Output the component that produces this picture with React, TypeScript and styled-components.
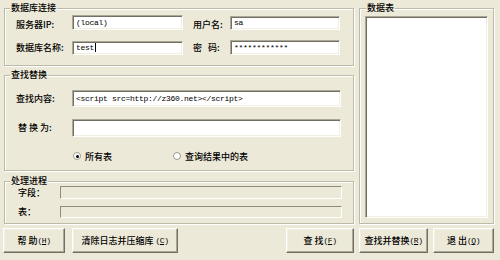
import React from "react";
import styled, { createGlobalStyle } from "styled-components";

const Global = createGlobalStyle`
  html, body { margin: 0; padding: 0; background: #ECE9D8; }
  body { width: 500px; height: 260px; overflow: hidden; }
`;

const cjk = `"Noto Sans CJK SC", "Noto Sans", sans-serif`;

const Window = styled.div`
  width: 500px;
  height: 260px;
  box-sizing: border-box;
  padding: 8px 6px 0 4px;
  background: #ECE9D8;
  font-family: ${cjk};
  font-size: 9px;
  font-weight: 500;
  color: #000;
  display: flex;
  flex-direction: column;
`;

const Main = styled.div`
  display: grid;
  grid-template-columns: 350px 135px;
  column-gap: 5px;
  height: 216px;
`;

const LeftCol = styled.div`
  display: flex;
  flex-direction: column;
`;

const Group = styled.div<{ $h: number; $mt?: number }>`
  position: relative;
  box-sizing: border-box;
  height: ${(p) => p.$h}px;
  margin-top: ${(p) => p.$mt ?? 0}px;
  border: 1px solid #BDBAA9;
  box-shadow: inset 1px 1px 0 #fff, 1px 1px 0 #fff;
`;

const Title = styled.span<{ $left?: number }>`
  position: absolute;
  top: -7px;
  left: ${(p) => p.$left ?? 5}px;
  padding: 0 1px;
  line-height: 12px;
  background: #ECE9D8;
  font-size: 9px;
  color: #000;
  white-space: nowrap;
`;

const ConnGrid = styled.div`
  display: grid;
  grid-template-columns: 56px 111px 47px 110px;
  grid-template-rows: 15px 15px;
  row-gap: 10px;
  padding: 6px 0 0 11px;
  align-items: center;
`;

const Label = styled.span<{ $pl?: number; $dy?: number }>`
  padding-left: ${(p) => p.$pl ?? 0}px;
  position: relative;
  top: ${(p) => p.$dy ?? 0}px;
  white-space: nowrap;
  line-height: 12px;
`;

const TextBox = styled.div<{ $h: number }>`
  box-sizing: border-box;
  height: ${(p) => p.$h}px;
  background: #fff;
  border-top: 1px solid #ACA899;
  border-left: 1px solid #ACA899;
  border-right: 1px solid #fff;
  border-bottom: 1px solid #fff;
  box-shadow: inset 1px 1px 0 #716F64, inset -1px -1px 0 #F1EFE2;
  font-family: "Liberation Mono", "DejaVu Sans Mono", monospace;
  font-size: 8px;
  font-weight: 400;
  letter-spacing: -0.3px;
  line-height: ${(p) => p.$h - 4}px;
  padding: 1px 3px;
  white-space: nowrap;
  overflow: hidden;
  display: flex;
  align-items: center;
`;

const Caret = styled.span`
  display: inline-block;
  width: 1px;
  height: 9px;
  background: #000;
  margin-left: 1px;
`;

const FindBody = styled.div`
  display: flex;
  flex-direction: column;
  padding: 14px 12px 0 11px;
`;

const FieldRow = styled.div<{ $mt?: number; $label: number }>`
  display: grid;
  grid-template-columns: ${(p) => p.$label}px 1fr;
  align-items: center;
  margin-top: ${(p) => p.$mt ?? 0}px;
`;

const RadioRow = styled.div`
  display: flex;
  align-items: center;
  height: 12px;
  margin-top: 13px;
  padding-left: 57px;
`;

const RadioItem = styled.label<{ $w?: number }>`
  display: flex;
  align-items: center;
  gap: 4px;
  width: ${(p) => (p.$w ? `${p.$w}px` : "auto")};
`;

const RadioCircle = styled.span<{ $on?: boolean }>`
  position: relative;
  box-sizing: border-box;
  width: 8px;
  height: 8px;
  border-radius: 50%;
  background: #fff;
  border: 1px solid #9C9A8C;
  &::after {
    content: "";
    display: ${(p) => (p.$on ? "block" : "none")};
    position: absolute;
    left: 1.5px;
    top: 1.5px;
    width: 3px;
    height: 3px;
    border-radius: 50%;
    background: #000;
  }
`;

const ProgBody = styled.div`
  display: flex;
  flex-direction: column;
  gap: 7px;
  padding: 4px 11px 0 11px;
`;

const Bar = styled.div<{ $h: number }>`
  box-sizing: border-box;
  height: ${(p) => p.$h}px;
  border-top: 1px solid #8E8C7F;
  border-left: 1px solid #8E8C7F;
  border-right: 1px solid #fff;
  border-bottom: 1px solid #fff;
`;

const ListBox = styled.div`
  box-sizing: border-box;
  margin: 7px 0 0 5px;
  width: 123px;
  height: 202px;
  background: #fff;
  border-top: 1px solid #ACA899;
  border-left: 1px solid #ACA899;
  border-right: 1px solid #fff;
  border-bottom: 1px solid #fff;
  box-shadow: inset 1px 1px 0 #716F64, inset -1px -1px 0 #F1EFE2;
`;

const ButtonBar = styled.div`
  display: flex;
  margin-top: 4px;
  margin-left: -1px;
  height: 25px;
`;

const Spacer = styled.div`
  flex: 1;
`;

const Btn = styled.button<{ $w: number; $ml?: number }>`
  box-sizing: border-box;
  width: ${(p) => p.$w}px;
  height: 25px;
  margin-left: ${(p) => p.$ml ?? 0}px;
  padding: 0;
  background: #ECE9D8;
  font-family: ${cjk};
  font-size: 9px;
  font-weight: 500;
  color: #000;
  border-top: 1px solid #fff;
  border-left: 1px solid #fff;
  border-right: 1px solid #716F64;
  border-bottom: 1px solid #716F64;
  box-shadow: inset -1px -1px 0 #ACA899, inset 1px 1px 0 #F1EFE2;
  display: flex;
  align-items: center;
  justify-content: center;
  white-space: nowrap;
`;

const Key = styled.span`
  font-family: "Liberation Mono", monospace;
  font-size: 8px;
  font-weight: 400;
  letter-spacing: -0.5px;
  u { text-decoration: underline; }
`;

const Hk = ({ k }: { k: string }) => (
  <Key>
    (<u>{k}</u>)
  </Key>
);

export default function App() {
  return (
    <>
      <Global />
      <Window>
        <Main>
          <LeftCol>
            <Group $h={58}>
              <Title>数据库连接</Title>
              <ConnGrid>
                <Label $dy={2}>服务器IP:</Label>
                <TextBox $h={15}>(local)</TextBox>
                <Label $pl={10} $dy={2}>用户名:</Label>
                <TextBox $h={14}>sa</TextBox>
                <Label>数据库名称:</Label>
                <TextBox $h={14}>
                  test<Caret />
                </TextBox>
                <Label $pl={10}>密&nbsp;&nbsp;&nbsp;码:</Label>
                <TextBox $h={15}>************</TextBox>
              </ConnGrid>
            </Group>
            <Group $h={96} $mt={9}>
              <Title>查找替换</Title>
              <FindBody>
                <FieldRow $label={56}>
                  <Label>查找内容:</Label>
                  <TextBox $h={17}>{"<script src=http://z360.net></script>"}</TextBox>
                </FieldRow>
                <FieldRow $label={56} $mt={12}>
                  <Label>&nbsp;替&nbsp;换&nbsp;为:</Label>
                  <TextBox $h={18} />
                </FieldRow>
                <RadioRow>
                  <RadioItem $w={100}>
                    <RadioCircle $on />
                    所有表
                  </RadioItem>
                  <RadioItem>
                    <RadioCircle />
                    查询结果中的表
                  </RadioItem>
                </RadioRow>
              </FindBody>
            </Group>
            <Group $h={43} $mt={10}>
              <Title>处理进程</Title>
              <ProgBody>
                <FieldRow $label={44}>
                  <Label>&nbsp;字段：</Label>
                  <Bar $h={13} />
                </FieldRow>
                <FieldRow $label={44}>
                  <Label>&nbsp;表：</Label>
                  <Bar $h={12} />
                </FieldRow>
              </ProgBody>
            </Group>
          </LeftCol>
          <Group $h={216}>
            <Title $left={6}>数据表</Title>
            <ListBox />
          </Group>
        </Main>
        <ButtonBar>
          <Btn $w={62}>
            帮&nbsp;助<Hk k="H" />
          </Btn>
          <Btn $w={106} $ml={7}>
            清除日志并压缩库&nbsp;<Hk k="C" />
          </Btn>
          <Spacer />
          <Btn $w={68}>
            查&nbsp;找<Hk k="F" />
          </Btn>
          <Btn $w={69} $ml={5}>
            查找并替换<Hk k="R" />
          </Btn>
          <Btn $w={61} $ml={5}>
            退&nbsp;出<Hk k="Q" />
          </Btn>
        </ButtonBar>
      </Window>
    </>
  );
}
